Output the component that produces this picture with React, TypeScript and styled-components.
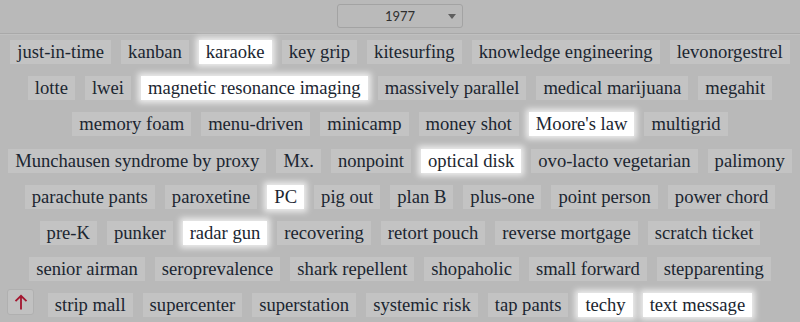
import React from "react";
import styled, { createGlobalStyle } from "styled-components";

type Term = { label: string; active?: boolean };

const rows: Term[][] = [
  [
    { label: "just-in-time" },
    { label: "kanban" },
    { label: "karaoke", active: true },
    { label: "key grip" },
    { label: "kitesurfing" },
    { label: "knowledge engineering" },
    { label: "levonorgestrel" },
  ],
  [
    { label: "lotte" },
    { label: "lwei" },
    { label: "magnetic resonance imaging", active: true },
    { label: "massively parallel" },
    { label: "medical marijuana" },
    { label: "megahit" },
  ],
  [
    { label: "memory foam" },
    { label: "menu-driven" },
    { label: "minicamp" },
    { label: "money shot" },
    { label: "Moore's law", active: true },
    { label: "multigrid" },
  ],
  [
    { label: "Munchausen syndrome by proxy" },
    { label: "Mx." },
    { label: "nonpoint" },
    { label: "optical disk", active: true },
    { label: "ovo-lacto vegetarian" },
    { label: "palimony" },
  ],
  [
    { label: "parachute pants" },
    { label: "paroxetine" },
    { label: "PC", active: true },
    { label: "pig out" },
    { label: "plan B" },
    { label: "plus-one" },
    { label: "point person" },
    { label: "power chord" },
  ],
  [
    { label: "pre-K" },
    { label: "punker" },
    { label: "radar gun", active: true },
    { label: "recovering" },
    { label: "retort pouch" },
    { label: "reverse mortgage" },
    { label: "scratch ticket" },
  ],
  [
    { label: "senior airman" },
    { label: "seroprevalence" },
    { label: "shark repellent" },
    { label: "shopaholic" },
    { label: "small forward" },
    { label: "stepparenting" },
  ],
  [
    { label: "strip mall" },
    { label: "supercenter" },
    { label: "superstation" },
    { label: "systemic risk" },
    { label: "tap pants" },
    { label: "techy", active: true },
    { label: "text message", active: true },
  ],
];

const GlobalStyle = createGlobalStyle`
  html, body {
    margin: 0;
    padding: 0;
    background: #b9b9b9;
  }
  body {
    width: 800px;
    height: 322px;
    overflow: hidden;
    font-family: "Liberation Serif", serif;
  }
`;

export default function App(): JSX.Element {
  return (
    <>
      <GlobalStyle />
      <Page>
        <Header>
          <YearSelect>
            <YearValue>1977</YearValue>
            <Caret />
          </YearSelect>
        </Header>
        <TermList>
          {rows.map((row, i) => (
            <TermRow key={i}>
              {row.map((term) => (
                <Tag key={term.label} $active={term.active}>
                  {term.label}
                </Tag>
              ))}
            </TermRow>
          ))}
        </TermList>
        <TopButton aria-label="Back to top">
          <svg width="14" height="16" viewBox="0 0 14 16" fill="none">
            <path
              d="M7 15.5V1.8M1.5 7.2L7 1.8L12.5 7.2"
              stroke="currentColor"
              strokeWidth="1.8"
            />
          </svg>
        </TopButton>
      </Page>
    </>
  );
}

const Page = styled.div`
  position: relative;
  width: 800px;
  height: 322px;
  background: #b9b9b9;
`;

const Header = styled.header`
  height: 34px;
  display: flex;
  justify-content: center;
  align-items: flex-start;
  padding-top: 4px;
  box-sizing: border-box;
  border-bottom: 1px solid #a9a9a9;
  box-shadow: 0 1px 0 #c0c0c0;
`;

const YearSelect = styled.div`
  width: 126px;
  height: 24px;
  box-sizing: border-box;
  border: 1px solid #a3a3a3;
  border-radius: 3px;
  background: #bababa;
  position: relative;
  display: flex;
  align-items: center;
  justify-content: center;
`;

const YearValue = styled.span`
  font-family: Lato, "Liberation Sans", sans-serif;
  font-size: 13px;
  color: #2f2f2f;
`;

const Caret = styled.span`
  position: absolute;
  right: 6px;
  top: 9px;
  width: 0;
  height: 0;
  border-left: 4px solid transparent;
  border-right: 4px solid transparent;
  border-top: 5px solid #5e5e5e;
`;

const TermList = styled.main`
  display: flex;
  flex-direction: column;
  gap: 12.2px;
  padding-top: 6px;
`;

const TermRow = styled.div`
  display: flex;
  justify-content: center;
  gap: 10px;
`;

const Tag = styled.span<{ $active?: boolean }>`
  font-family: "Liberation Serif", serif;
  font-size: 18.6px;
  line-height: 24px;
  height: 24px;
  padding: 0 7px;
  white-space: nowrap;
  color: #1b2631;
  background: ${({ $active }) => ($active ? "#ffffff" : "#c3c3c3")};
  box-shadow: ${({ $active }) =>
    $active ? "0 0 6px 3px rgba(255, 255, 255, 0.75)" : "none"};
`;

const TopButton = styled.button`
  position: absolute;
  left: 7px;
  bottom: 7px;
  width: 27px;
  height: 26px;
  padding: 0;
  border: 1px solid #b0b0b0;
  border-radius: 3px;
  background: #c1c1c1;
  color: #a3162f;
  display: flex;
  align-items: center;
  justify-content: center;
`;
